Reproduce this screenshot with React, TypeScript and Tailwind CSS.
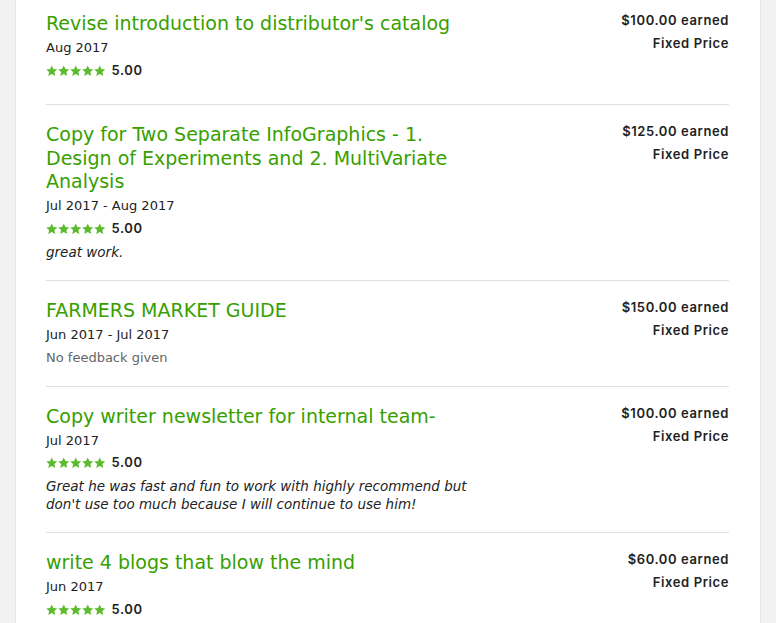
const jobs = [
  {
    title: "Revise introduction to distributor's catalog",
    dates: "Aug 2017",
    rating: "5.00",
    earned: "$100.00",
  },
  {
    title: "Copy for Two Separate InfoGraphics - 1. Design of Experiments and 2. MultiVariate Analysis",
    dates: "Jul 2017 - Aug 2017",
    rating: "5.00",
    comment: "great work.",
    earned: "$125.00",
  },
  {
    title: "FARMERS MARKET GUIDE",
    dates: "Jun 2017 - Jul 2017",
    earned: "$150.00",
  },
  {
    title: "Copy writer newsletter for internal team-",
    dates: "Jul 2017",
    rating: "5.00",
    comment:
      "Great he was fast and fun to work with highly recommend but don't use too much because I will continue to use him!",
    earned: "$100.00",
  },
  {
    title: "write 4 blogs that blow the mind",
    dates: "Jun 2017",
    rating: "5.00",
    earned: "$60.00",
  },
];

const strong = { fontFamily: "Inter, Arial, sans-serif" };

function Stars() {
  return (
    <span className="flex gap-[0.5px]">
      {[0, 1, 2, 3, 4].map((i) => (
        <svg key={i} viewBox="0 0 24 24" className="h-[12px] w-[11.5px] fill-[#5cbc2d]">
          <path d="M12 0.5l3.5 7.3 8 .9-6 5.5 1.7 8L12 18.2l-7.2 4 1.7-8-6-5.5 8-.9z" />
        </svg>
      ))}
    </span>
  );
}

export default function App() {
  return (
    <div
      className="min-h-[623px] bg-[#f2f2f2] px-[16px]"
      style={{ fontFamily: '"DejaVu Sans", Arial, sans-serif' }}
    >
      <div className="min-h-[623px] bg-white pr-[31px] pl-[30px] shadow-[0_0_2px_rgba(0,0,0,0.15)]">
        {jobs.map((job, i) => (
          <div
            key={i}
            className={`flex items-start justify-between ${i === 0 ? "pt-[12px] pb-[20px]" : "pt-[18px] pb-[19px]"} ${
              i < jobs.length - 1 ? "border-b border-[#e0e0e0]" : ""
            }`}
          >
            <div className="w-[432px]">
              <h3 className="text-[19px] leading-[23.5px] font-normal text-[#37a000]">{job.title}</h3>
              <p className="mt-[0.5px] text-[13px] leading-[23px] text-[#222]">{job.dates}</p>
              {job.rating ? (
                <div className={`flex h-[23px] items-center gap-[6px] ${job.comment ? "" : "mb-[2px]"}`}>
                  <Stars />
                  <span style={strong} className="text-[13px] font-semibold tracking-[0.6px] text-[#222]">
                    {job.rating}
                  </span>
                </div>
              ) : (
                <p className="mt-[3px] text-[13px] leading-[18px] text-[#656565]">No feedback given</p>
              )}
              {job.comment && (
                <p className="mt-[2.5px] text-[13.5px] leading-[18px] text-[#222] italic">{job.comment}</p>
              )}
            </div>
            <div
              style={strong}
              className="-mt-[3px] text-right text-[13px] leading-[23px] font-semibold tracking-[0.6px] text-[#222]"
            >
              <p>{job.earned} earned</p>
              <p>Fixed Price</p>
            </div>
          </div>
        ))}
      </div>
    </div>
  );
}
